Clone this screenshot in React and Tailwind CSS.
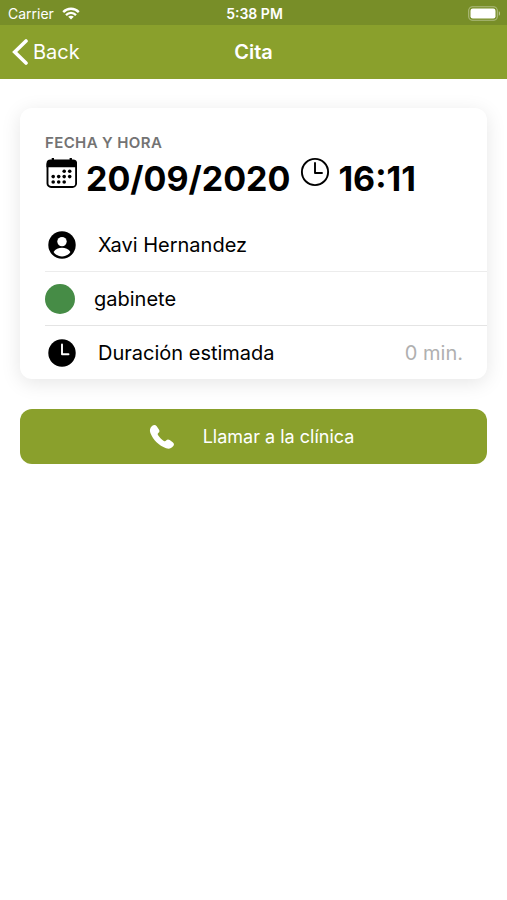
function WifiIcon() {
  return (
    <svg viewBox="0 0 18 13" className="h-[13px] w-[18px]" fill="none" stroke="currentColor" strokeWidth="2.3">
      <path d="M1.2 5.1C5.5.6 12.5.6 16.800 5.100" />
      <path d="M4 8.100c2.800-2.900 7.200-2.900 10 0" />
      <path d="M9 12.600 6.200 9.800c1.600-1.500 4-1.500 5.600 0z" fill="currentColor" stroke="none" />
    </svg>
  );
}

function BatteryIcon() {
  return (
    <svg viewBox="0 0 33 15" className="h-[15px] w-[33px]" fill="currentColor">
      <rect x="0.7" y="0.7" width="28.6" height="13.6" rx="3.8" fill="none" stroke="currentColor" strokeOpacity="0.4" strokeWidth="1.1" />
      <rect x="2.5" y="2.5" width="25" height="10" rx="2.2" />
      <path d="M30.800 5.200c1.600.5 1.600 4.100 0 4.600z" opacity="0.5" />
    </svg>
  );
}

function BackIcon() {
  return (
    <svg viewBox="0 0 16 26" className="h-[26px] w-4" fill="none" stroke="currentColor" strokeWidth="3.6">
      <path d="M14 2 2.700 13 14 24" strokeLinecap="round" />
    </svg>
  );
}

// Day dots of the calendar sheet, [column, row]
const days = [
  [3, 0], [4, 0],
  [1, 1], [2, 1], [3, 1], [4, 1],
  [1, 2], [2, 2], [3, 2],
];

function CalendarIcon() {
  return (
    <svg viewBox="0 0 32 32" className="h-8 w-8" fill="currentColor">
      <rect x="2.5" y="4" width="28.6" height="26" rx="3.6" fill="none" stroke="currentColor" strokeWidth="1.9" />
      <path d="M1.500 10.300V6.600a4 4 0 0 1 4-4h1.200V1h2.300v1.600h15.600V1h2.300v1.600h1.200a4 4 0 0 1 4 4v3.700z" />
      {days.map(([col, row]) => (
        <circle key={`${col}-${row}`} cx={2.7 + col * 5.5} cy={14.2 + row * 5.4} r="1.8" />
      ))}
    </svg>
  );
}

function ClockOutlineIcon() {
  return (
    <svg viewBox="0 0 30 30" className="h-[30px] w-[30px]" fill="none" stroke="currentColor" strokeWidth="1.9">
      <circle cx="15" cy="15" r="13.1" />
      <path d="M15 6v10h7" strokeLinecap="round" strokeLinejoin="round" />
    </svg>
  );
}

function PersonIcon() {
  return (
    <svg viewBox="0 0 28 28" className="h-7 w-7">
      <circle cx="14" cy="14" r="13.7" fill="black" />
      <circle cx="14" cy="10.6" r="4.7" fill="white" />
      <path d="M5.600 20.900c1.800-2.900 5-4.200 8.400-4.200s6.600 1.300 8.400 4.200c-2 2.900-5 4.600-8.400 4.600s-6.400-1.700-8.400-4.600z" fill="white" />
    </svg>
  );
}

function ClockIcon() {
  return (
    <svg viewBox="0 0 28 28" className="h-7 w-7">
      <circle cx="14" cy="14" r="13.7" fill="black" />
      <path d="M14 5.500v9.800h6.500" fill="none" stroke="white" strokeWidth="1.9" strokeLinecap="round" strokeLinejoin="round" />
    </svg>
  );
}

function PhoneIcon() {
  return (
    <svg viewBox="0 0 26 26" className="h-[26px] w-[26px]" fill="currentColor">
      <path d="M3 2.100C4.800.6 6.400.6 7.700 2.300l2.200 3.100c.9 1.400.7 2.400-.4 3.400-1.200 1-.9 1.500-.2 2.700 1.500 2.300 3.200 4 5.500 5.400 1 .6 1.500.7 2.300-.3 1.100-1.300 2.200-1.500 3.600-.5l3 2.100c1.600 1.200 1.700 2.600.4 4.100-1.900 2.200-4.200 2.900-7 1.900C9.800 21.700 4.200 16.100 1.400 9.100.4 6.400.9 3.900 3 2.100z" />
    </svg>
  );
}

export default function App() {
  return (
    <div className="min-h-screen bg-white font-['Inter','Liberation_Sans',sans-serif] text-black">
      <header className="bg-[#8aa02c] text-white">
        {/* Status bar */}
        <div className="grid h-[25px] grid-cols-3 items-center bg-[#788e28] pt-0.5 pr-1.5 pl-2 text-sm">
          <div className="flex items-center gap-2">
            <span>Carrier</span>
            <WifiIcon />
          </div>
          <span className="text-center font-semibold">5:38 PM</span>
          <div className="flex justify-end">
            <BatteryIcon />
          </div>
        </div>

        {/* Navigation bar */}
        <div className="grid h-[54px] grid-cols-3 items-center px-3 text-xl">
          <button type="button" className="flex items-center gap-[5px] justify-self-start">
            <BackIcon />
            Back
          </button>
          <h1 className="text-center font-semibold">Cita</h1>
        </div>
      </header>

      <main className="px-5 pt-[29px]">
        <section className="rounded-xl bg-white pl-[25px] shadow-[0_4px_20px_rgba(0,0,0,0.1)]">
          <div className="h-[110px] pt-[25px]">
            <h2 className="text-[15px] leading-5 font-semibold tracking-wide text-[#737373]">FECHA Y HORA</h2>
            <div className="flex items-start text-[34px] leading-10 font-bold">
              <span className="mt-1 mr-[9px]"><CalendarIcon /></span>
              <span className="mt-1.5 mr-2.5">20/09/2020</span>
              <span className="mt-1 mr-2"><ClockOutlineIcon /></span>
              <span className="mt-1.5">16:11</span>
            </div>
          </div>

          <ul className="text-xl">
            <li className="flex h-[54px] items-center border-b border-[#ececec] pl-[3px]">
              <PersonIcon />
              <span className="ml-[22px]">Xavi Hernandez</span>
            </li>
            <li className="flex h-[54px] items-center border-b border-[#e4e4e4]">
              <span className="h-[30px] w-[30px] rounded-full bg-[#468c46]" />
              <span className="ml-[19px]">gabinete</span>
            </li>
            <li className="flex h-[53px] items-center pr-6 pl-[3px]">
              <ClockIcon />
              <span className="ml-[22px]">Duración estimada</span>
              <span className="ml-auto text-[#b0b0b0]">0 min.</span>
            </li>
          </ul>
        </section>

        <button
          type="button"
          className="mt-[30px] flex h-[55px] w-full items-center justify-center gap-7 rounded-xl bg-[#8aa02c] pr-1 text-lg text-white"
        >
          <PhoneIcon />
          Llamar a la clínica
        </button>
      </main>
    </div>
  );
}
